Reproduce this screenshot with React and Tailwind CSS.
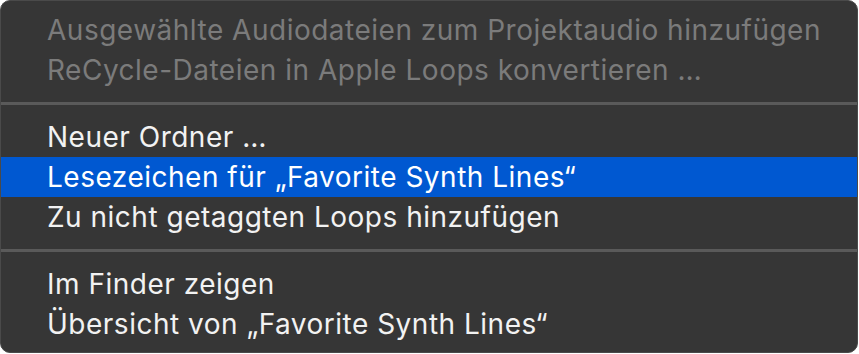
const groups = [
  [
    { label: 'Ausgewählte Audiodateien zum Projektaudio hinzufügen', disabled: true },
    { label: 'ReCycle-Dateien in Apple Loops konvertieren …', disabled: true },
  ],
  [
    { label: 'Neuer Ordner …' },
    { label: 'Lesezeichen für „Favorite Synth Lines“', active: true },
    { label: 'Zu nicht getaggten Loops hinzufügen' },
  ],
  [
    { label: 'Im Finder zeigen' },
    { label: 'Übersicht von „Favorite Synth Lines“' },
  ],
];

export default function App() {
  return (
    <div className="h-[354px] w-[859px] bg-white" style={{ fontFamily: 'Inter, "Noto Sans", sans-serif' }}>
      <div className="flex h-[353px] w-[858px] flex-col overflow-hidden rounded-[10px] border border-[#4a4a4a] bg-[#363636] pt-[9px]">
        {groups.map((group, gi) => (
          <div key={gi}>
            {gi > 0 && <div className="my-[12px] h-[3px] bg-[#5a5a5a]" />}
            {group.map((item) => (
              <div
                key={item.label}
                className={
                  'flex h-[40px] items-center pl-[46px] text-[28px] tracking-[0.5px] ' +
                  (item.active
                    ? 'bg-[#0058d1] text-white'
                    : item.disabled
                    ? 'text-[#7b7b7b]'
                    : 'text-[#f2f2f2]')
                }
              >
                {item.label}
              </div>
            ))}
          </div>
        ))}
      </div>
    </div>
  );
}
